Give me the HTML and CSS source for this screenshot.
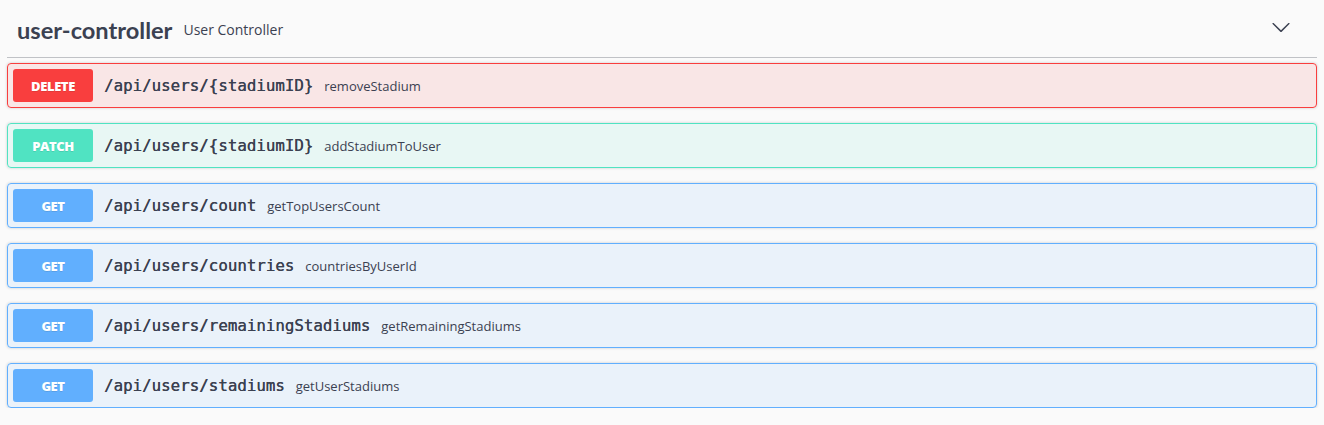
FILE: index.html
```html
<!DOCTYPE html>
<html>
<head>
<meta charset="utf-8">
<link rel="stylesheet" href="styles.css">
</head>
<body>
<div class="tag-section">
  <div class="tag-header">
    <span class="tag-name">user-controller</span>
    <span class="tag-desc">User Controller</span>
    <span class="spacer"></span>
    <svg class="arrow" width="20" height="20" viewBox="0 0 20 20"><path d="M17.418 6.109c.272-.268.709-.268.979 0s.271.701 0 .969l-7.908 7.83c-.27.268-.707.268-.979 0l-7.908-7.830c-.27-.268-.27-.701 0-.969.271-.268.709-.268.979 0L10 13.25l7.418-7.141z"/></svg>
  </div>
  <div class="ops">
    <div class="op op-delete"><span class="method">DELETE</span><span class="path">/api/users/{stadiumID}</span><span class="summary">removeStadium</span></div>
    <div class="op op-patch"><span class="method">PATCH</span><span class="path">/api/users/{stadiumID}</span><span class="summary">addStadiumToUser</span></div>
    <div class="op op-get"><span class="method">GET</span><span class="path">/api/users/count</span><span class="summary">getTopUsersCount</span></div>
    <div class="op op-get"><span class="method">GET</span><span class="path">/api/users/countries</span><span class="summary">countriesByUserId</span></div>
    <div class="op op-get"><span class="method">GET</span><span class="path">/api/users/remainingStadiums</span><span class="summary">getRemainingStadiums</span></div>
    <div class="op op-get"><span class="method">GET</span><span class="path">/api/users/stadiums</span><span class="summary">getUserStadiums</span></div>
  </div>
</div>
</body>
</html>
```
FILE: styles.css
```css
html, body {
  margin: 0;
  padding: 0;
  background: #fafafa;
  color: #3b4151;
  font-family: "Open Sans", sans-serif;
}
.tag-section {
  padding: 0 7px 0 7px;
}
.tag-header {
  display: flex;
  align-items: center;
  height: 57px;
  padding: 0 26px 0 10px;
  border-bottom: 1px solid rgba(59, 65, 81, 0.3);
  margin-bottom: 5px;
}
.tag-name {
  font-family: "Lato", sans-serif;
  font-weight: 700;
  font-size: 23.6px;
  color: #3b4151;
  margin-top: 2px;
}
.tag-desc {
  font-size: 14px;
  margin-left: 11px;
  margin-top: 2px;
}
.spacer { flex: 1; }
.arrow { fill: #3b4151; margin-top: -3px; }
.ops {
  display: flex;
  flex-direction: column;
  gap: 15px;
}
.op {
  display: flex;
  align-items: center;
  padding: 5px;
  border: 1px solid;
  border-radius: 4px;
  box-shadow: 0 0 3px rgba(0, 0, 0, 0.19);
}
.method {
  width: 80px;
  height: 33px;
  display: flex;
  align-items: center;
  justify-content: center;
  border-radius: 3px;
  color: #fff;
  font-family: "Open Sans", sans-serif;
  font-weight: 800;
  font-size: 13px;
  letter-spacing: -0.4px;
  text-shadow: 0 1px 0 rgba(0, 0, 0, 0.1);
}
.path {
  font-family: "DejaVu Sans Mono", monospace;
  font-weight: 400;
  font-size: 15.8px;
  padding: 0 11px 0 11px;
  color: #3b4151;
  text-shadow: 0.3px 0 0 #3b4151;
}
.summary {
  font-size: 13px;
  color: #3b4151;
}
.op-delete { background: rgba(249, 62, 62, 0.1); border-color: #f93e3e; }
.op-delete .method { background: #f93e3e; }
.op-patch { background: rgba(80, 227, 194, 0.1); border-color: #50e3c2; }
.op-patch .method { background: #50e3c2; }
.op-get { background: rgba(97, 175, 254, 0.1); border-color: #61affe; }
.op-get .method { background: #61affe; }
```
